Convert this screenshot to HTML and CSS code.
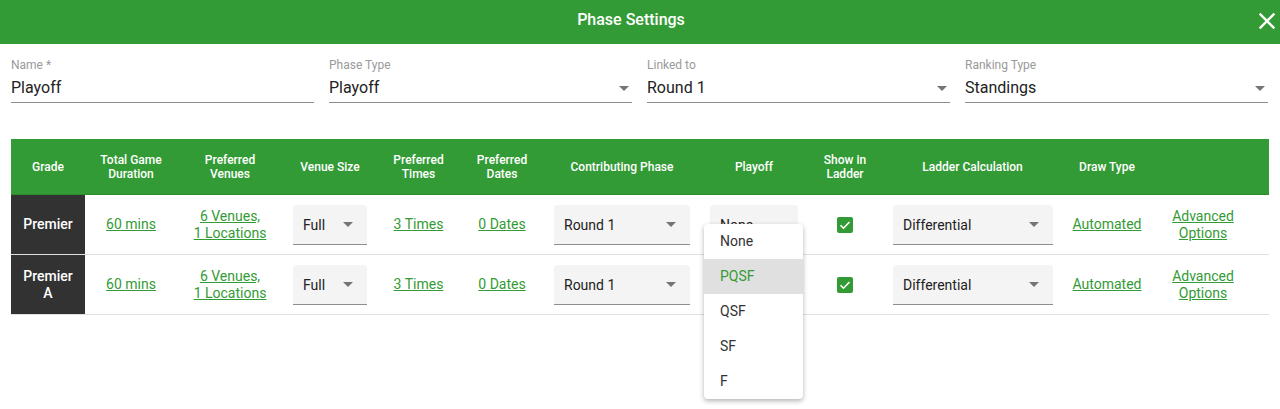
FILE: index.html
```html
<!DOCTYPE html>
<html>
    <head>
        <title>Phase Settings</title>
        <meta charset="UTF-8">
        <link rel="stylesheet" href="styles.css">
    </head>
    <body>
        <div class="topbar">
            <span class="title">Phase Settings</span>
            <svg class="close" width="28" height="28" viewBox="0 0 24 24"><path d="M19 6.41L17.59 5 12 10.59 6.41 5 5 6.41 10.59 12 5 17.59 6.41 19 12 13.41 17.59 19 19 17.59 13.41 12z" fill="#fff"/></svg>
        </div>

        <div class="fields">
            <div class="field">
                <label>Name *</label>
                <div class="value">Playoff</div>
            </div>
            <div class="field">
                <label>Phase Type</label>
                <div class="value">Playoff <span class="arrow"></span></div>
            </div>
            <div class="field">
                <label>Linked to</label>
                <div class="value">Round 1 <span class="arrow"></span></div>
            </div>
            <div class="field">
                <label>Ranking Type</label>
                <div class="value">Standings <span class="arrow"></span></div>
            </div>
        </div>

        <div class="grid">
            <div class="row head">
                <div>Grade</div>
                <div>Total Game<br>Duration</div>
                <div>Preferred<br>Venues</div>
                <div>Venue Size</div>
                <div>Preferred<br>Times</div>
                <div>Preferred<br>Dates</div>
                <div>Contributing Phase</div>
                <div>Playoff</div>
                <div>Show in<br>Ladder</div>
                <div>Ladder Calculation</div>
                <div>Draw Type</div>
                <div></div>
                <div></div>
            </div>

            <div class="row">
                <div class="grade">Premier</div>
                <div><a href="#">60 mins</a></div>
                <div><a href="#">6 Venues,<br>1 Locations</a></div>
                <div><div class="select">Full <span class="arrow"></span></div></div>
                <div><a href="#">3 Times</a></div>
                <div><a href="#">0 Dates</a></div>
                <div><div class="select">Round 1 <span class="arrow"></span></div></div>
                <div class="menu-holder">
                    <div class="select">None</div>
                    <ul class="menu">
                        <li>None</li>
                        <li class="active">PQSF</li>
                        <li>QSF</li>
                        <li>SF</li>
                        <li>F</li>
                    </ul>
                </div>
                <div><span class="check"><svg width="16" height="16" viewBox="0 0 16 16"><path d="M3.5 8.2l3 3 6-6.2" stroke="#fff" stroke-width="1.6" fill="none"/></svg></span></div>
                <div><div class="select">Differential <span class="arrow"></span></div></div>
                <div><a href="#">Automated</a></div>
                <div><a href="#">Advanced<br>Options</a></div>
                <div></div>
            </div>

            <div class="row">
                <div class="grade">Premier<br>A</div>
                <div><a href="#">60 mins</a></div>
                <div><a href="#">6 Venues,<br>1 Locations</a></div>
                <div><div class="select">Full <span class="arrow"></span></div></div>
                <div><a href="#">3 Times</a></div>
                <div><a href="#">0 Dates</a></div>
                <div><div class="select">Round 1 <span class="arrow"></span></div></div>
                <div><div class="select hidden">PQSF</div></div>
                <div><span class="check"><svg width="16" height="16" viewBox="0 0 16 16"><path d="M3.5 8.2l3 3 6-6.2" stroke="#fff" stroke-width="1.6" fill="none"/></svg></span></div>
                <div><div class="select">Differential <span class="arrow"></span></div></div>
                <div><a href="#">Automated</a></div>
                <div><a href="#">Advanced<br>Options</a></div>
                <div></div>
            </div>
        </div>
    </body>
</html>
```

FILE: styles.css
```css
html, body {
    min-height: 409px;
}
body {
    margin: 0;
    background-color: white;
    font-family: Roboto, "Liberation Sans", sans-serif;
    color: #222;
}
.topbar {
    height: 44px;
    background: #339b35;
    display: flex;
    align-items: center;
    justify-content: center;
    position: relative;
}
.title {
    color: white;
    font-size: 16px;
    font-weight: 500;
    margin-top: -6px;
    margin-right: 18px;
}
.close {
    position: absolute;
    right: -1px;
    top: 7px;
}

.fields {
    display: flex;
    gap: 15px;
    padding: 0 11px;
    margin-top: 14px;
}
.field {
    width: 303px;
    border-bottom: 1px solid #8c8c8c;
    padding-bottom: 3px;
}
.field label {
    display: block;
    font-size: 12px;
    line-height: 14px;
    color: #9a9a9a;
}
.field .value {
    position: relative;
    margin-top: 5px;
    font-size: 16px;
    line-height: 22px;
    color: #222;
}
.arrow {
    position: absolute;
    right: 3px;
    top: 50%;
    margin-top: -2px;
    border-left: 5px solid transparent;
    border-right: 5px solid transparent;
    border-top: 5px solid #757575;
}

.grid {
    margin: 36px 11px 0 11px;
}
.row {
    display: grid;
    grid-template-columns: 74px 92px 106px 94px 83px 84px 156px 108px 74px 181px 88px 104px 14px;
    border-bottom: 1px solid #e0e0e0;
}
.row > div {
    display: flex;
    align-items: center;
    justify-content: center;
    text-align: center;
    height: 59px;
    font-size: 14px;
    line-height: 17px;
}
.row > div:nth-child(4),
.row > div:nth-child(7),
.row > div:nth-child(8),
.row > div:nth-child(10) {
    padding: 0 10px;
}
.row > div:nth-child(10) {
    padding-left: 11px;
}
.row.head {
    background: #339b35;
    border-bottom: 1px solid #2c8a2e;
}
.row.head > div {
    height: 55px;
    color: white;
    font-size: 12px;
    font-weight: 500;
    line-height: 14px;
    padding: 0;
}
.row > div.grade {
    background: #323232;
    color: white;
    font-weight: 500;
}
a {
    color: #339b35;
}
.select {
    position: relative;
    width: 100%;
    height: 40px;
    background: #f4f4f4;
    border-radius: 4px 4px 0 0;
    border-bottom: 1px solid #8e8e8e;
    text-align: left;
    padding-left: 10px;
    box-sizing: border-box;
    line-height: 41px;
    font-size: 14px;
    color: #222;
}
.select .arrow {
    right: 14px;
}
.select.hidden {
    visibility: hidden;
}
.check {
    display: inline-block;
    width: 16px;
    height: 16px;
    background: #339b35;
    border-radius: 2px;
}
.check svg {
    display: block;
}
.menu-holder {
    position: relative;
}
.menu {
    position: absolute;
    left: 4px;
    top: 29px;
    width: 99px;
    margin: 0;
    padding: 0;
    list-style: none;
    background: white;
    border-radius: 4px;
    box-shadow: 0 2px 5px rgba(0, 0, 0, 0.3);
    z-index: 2;
}
.menu li {
    height: 35px;
    line-height: 35px;
    padding-left: 16px;
    text-align: left;
    font-size: 14px;
    color: #333;
}
.menu li.active {
    background: #e0e0e0;
    color: #339b35;
}
```
